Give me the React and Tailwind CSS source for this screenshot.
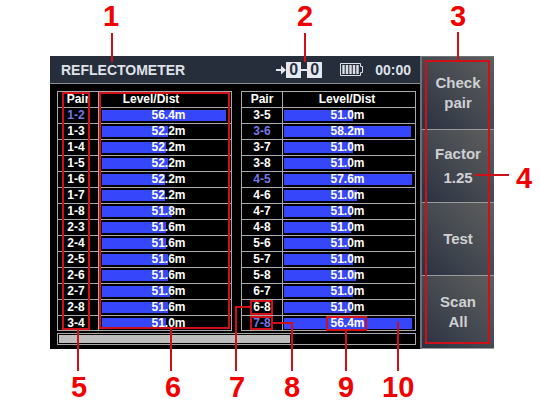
const LEFT_ROWS = [
  { pair: "1-2", value: "56.4m", fill: 126, alert: true },
  { pair: "1-3", value: "52.2m", fill: 67 },
  { pair: "1-4", value: "52.2m", fill: 65 },
  { pair: "1-5", value: "52.2m", fill: 67 },
  { pair: "1-6", value: "52.2m", fill: 64 },
  { pair: "1-7", value: "52.2m", fill: 64 },
  { pair: "1-8", value: "51.8m", fill: 71 },
  { pair: "2-3", value: "51.6m", fill: 65 },
  { pair: "2-4", value: "51.6m", fill: 65 },
  { pair: "2-5", value: "51.6m", fill: 67 },
  { pair: "2-6", value: "51.6m", fill: 67 },
  { pair: "2-7", value: "51.6m", fill: 69 },
  { pair: "2-8", value: "51.6m", fill: 67 },
  { pair: "3-4", value: "51.0m", fill: 65 },
];

const RIGHT_ROWS = [
  { pair: "3-5", value: "51.0m", fill: 69 },
  { pair: "3-6", value: "58.2m", fill: 127, alert: true },
  { pair: "3-7", value: "51.0m", fill: 69 },
  { pair: "3-8", value: "51.0m", fill: 66 },
  { pair: "4-5", value: "57.6m", fill: 128, alert: true },
  { pair: "4-6", value: "51.0m", fill: 73 },
  { pair: "4-7", value: "51.0m", fill: 67 },
  { pair: "4-8", value: "51.0m", fill: 67 },
  { pair: "5-6", value: "51.0m", fill: 65 },
  { pair: "5-7", value: "51.0m", fill: 69 },
  { pair: "5-8", value: "51.0m", fill: 72 },
  { pair: "6-7", value: "51.0m", fill: 69 },
  { pair: "6-8", value: "51,0m", fill: 67 },
  { pair: "7-8", value: "56.4m", fill: 128, alert: true },
];

const SCALE = 131;

function PairTable({ rows, label, headClass, barClass, valueClass, pairClass }) {
  return (
    <table
      aria-label={label}
      className="w-full table-fixed border-separate border-spacing-0 border-t border-l border-[#a9a9a9] text-center text-xs leading-[15px] font-bold text-white"
    >
      <colgroup>
        <col className="w-[41px]" />
        <col />
      </colgroup>
      <thead>
        <tr>
          <th scope="col" className="border-r border-b border-[#a9a9a9] p-0">Pair</th>
          <th scope="col" className={`border-r border-b border-[#a9a9a9] p-0 ${headClass}`}>Level/Dist</th>
        </tr>
      </thead>
      <tbody>
        {rows.map((row, i) => {
          const line = i === rows.length - 1 ? "leading-[14px]" : "leading-[15px]";
          return (
            <tr key={row.pair} className={line}>
              <td className={`border-r border-b border-[#a9a9a9] p-0 ${pairClass} ${row.alert ? "text-[#7577e6]" : ""}`}>
                {row.pair}
              </td>
              <td className={`border-r border-b border-[#a9a9a9] p-0 ${barClass}`}>
                <div className="grid items-center">
                  <div
                    className="col-start-1 row-start-1 h-[11px] bg-[#3647fb]"
                    style={{ width: `${(row.fill / SCALE) * 100}%` }}
                  />
                  <span className={`col-start-1 row-start-1 ${valueClass}`}>{row.value}</span>
                </div>
              </td>
            </tr>
          );
        })}
      </tbody>
    </table>
  );
}

function LinkIcon() {
  return (
    <svg width="10" height="12" viewBox="0 0 10 12" aria-hidden="true">
      <path d="M0 5H5V1.5L10 6L5 10.5V7H0Z" fill="#e6e8f0" />
    </svg>
  );
}

function BatteryIcon() {
  return (
    <svg width="24" height="13" viewBox="0 0 24 13" role="img" aria-label="Battery full">
      <path d="M.5 .5H20.5V3.5H22.5V9.5H20.5V12.5H.5Z" fill="none" stroke="#dcdee6" />
      <path d="M3.5 2V11M7 2V11M10.5 2V11M14 2V11M17.5 2V11" stroke="#dcdee6" strokeWidth="2.4" />
    </svg>
  );
}

function SoftKey({ lineClass = "leading-5", children }) {
  return (
    <button
      type="button"
      className={`flex flex-1 flex-col items-center justify-center border-b border-[#9a9b9f] bg-linear-to-tr from-[#2a3140] via-[#454a51] to-[#5e5e5d] text-[15px] font-bold text-[#cfd0d3] ${lineClass}`}
    >
      {children}
    </button>
  );
}

const FRAMES = [
  "left-[62px] top-[92px] w-[28px] h-[238px] border-2",
  "left-[99px] top-[92px] w-[131px] h-[237px] border-2",
  "left-[425px] top-[60px] w-[65px] h-[284px] border-2",
  "left-[250px] top-[300px] w-[23px] h-[15px] border-2",
  "left-[250px] top-[316px] w-[23px] h-[14px] border-2",
  "left-[326px] top-[316px] w-[41px] h-[15px] border-2",
];

const LEADERS = [
  "left-[111px] top-[33px] w-[2px] h-[29px]",
  "left-[304px] top-[33px] w-[2px] h-[29px]",
  "left-[457px] top-[32px] w-[2px] h-[28px]",
  "left-[475px] top-[174px] w-[34px] h-[2px]",
  "left-[77px] top-[330px] w-[2px] h-[41px]",
  "left-[170px] top-[329px] w-[2px] h-[42px]",
  "left-[235px] top-[306px] w-[2px] h-[65px]",
  "left-[235px] top-[306px] w-[15px] h-[2px]",
  "left-[273px] top-[322px] w-[20px] h-[2px]",
  "left-[291px] top-[322px] w-[2px] h-[49px]",
  "left-[345px] top-[331px] w-[2px] h-[40px]",
  "left-[397px] top-[322px] w-[2px] h-[49px]",
];

const NUMBERS = [
  ["1", "left-[103px] top-1"],
  ["2", "left-[297px] top-1"],
  ["3", "left-[450px] top-1"],
  ["4", "left-[516px] top-[166px]"],
  ["5", "left-[71px] top-[375px]"],
  ["6", "left-[165px] top-[375px]"],
  ["7", "left-[229px] top-[375px]"],
  ["8", "left-[284px] top-[375px]"],
  ["9", "left-[338px] top-[375px]"],
  ["10", "left-[382px] top-[375px]"],
];

function Callouts() {
  return (
    <div className="pointer-events-none absolute inset-0">
      {FRAMES.map((place) => (
        <span key={place} className={`absolute border-[#cf1018] ${place}`} />
      ))}
      {LEADERS.map((place) => (
        <span key={place} className={`absolute bg-[#cf1018] ${place}`} />
      ))}
      {NUMBERS.map(([text, place]) => (
        <span key={text} className={`absolute text-[29px] leading-6 font-bold text-[#f20000] ${place}`}>
          {text}
        </span>
      ))}
    </div>
  );
}

export default function App() {
  return (
    <main className="relative mx-auto w-full max-w-[540px] bg-white pt-14 pr-[46px] pb-[52px] pl-[50px] font-['Liberation_Sans',Arial,sans-serif]">
      <div className="flex bg-black">
        <section className="flex min-w-0 flex-1 flex-col">
          <header className="flex h-7 items-center border-b border-[#8b8f96] bg-[#272e3b] pr-[9px] pl-[11px] text-sm font-bold text-[#dfe1e8]">
            <h1 className="flex-1 pt-px">REFLECTOMETER</h1>
            <div className="mr-[18px] flex items-center">
              <LinkIcon />
              <span className="w-[15px] bg-[#e6e8f0] text-center text-base leading-4 text-[#272e3b]">0</span>
              <span className="h-[2px] w-[6px] bg-[#e6e8f0]" />
              <span className="w-[15px] bg-[#e6e8f0] text-center text-base leading-4 text-[#272e3b]">0</span>
            </div>
            <BatteryIcon />
            <time className="ml-[11px] pt-px">00:00</time>
          </header>
          <div className="flex flex-col gap-[2px] pt-[7px] pr-1 pb-1 pl-[7px]">
            <div className="grid grid-cols-2 gap-[9px]">
              <PairTable
                rows={LEFT_ROWS}
                label="Pairs 1-2 to 3-4"
                headClass="pr-7"
                barClass="pl-[3px]"
                valueClass="pl-1"
                pairClass="pr-1"
              />
              <PairTable
                rows={RIGHT_ROWS}
                label="Pairs 3-5 to 7-8"
                headClass="pr-1"
                barClass="pl-px"
                valueClass="pr-1"
                pairClass=""
              />
            </div>
            <div className="h-3 border border-[#a9a9a9] p-px">
              <div className="h-full w-[65%] bg-[#bdbdbd]" />
            </div>
          </div>
        </section>
        <nav className="flex w-[74px] flex-col border-t border-l-2 border-[#6d7075]">
          <SoftKey>
            <span>Check</span>
            <span>pair</span>
          </SoftKey>
          <SoftKey lineClass="leading-6">
            <span>Factor</span>
            <span>1.25</span>
          </SoftKey>
          <SoftKey>Test</SoftKey>
          <SoftKey>
            <span>Scan</span>
            <span>All</span>
          </SoftKey>
        </nav>
      </div>
      <Callouts />
    </main>
  );
}
